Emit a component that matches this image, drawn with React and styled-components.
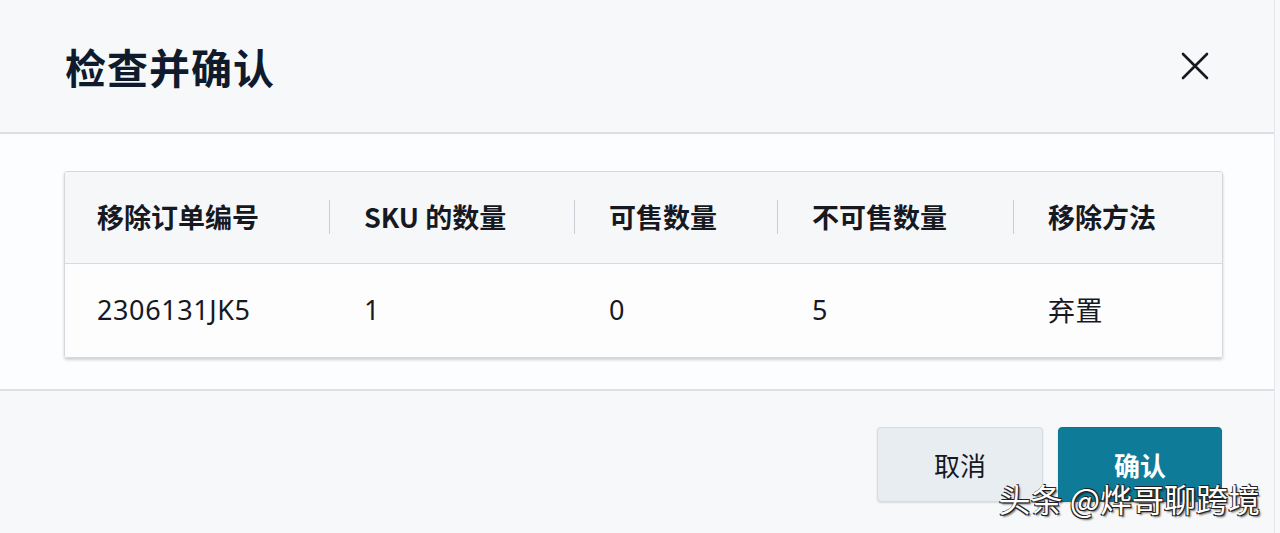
import React from 'react';
import styled, { createGlobalStyle } from 'styled-components';

const GlobalStyle = createGlobalStyle`
  html, body {
    margin: 0;
    padding: 0;
    background: #f7f8fa;
  }
  body {
    font-family: "Noto Sans", "Noto Sans CJK SC", sans-serif;
  }
`;

const columns = [
  { title: '移除订单编号', width: 264 },
  { title: 'SKU 的数量', width: 245 },
  { title: '可售数量', width: 203 },
  { title: '不可售数量', width: 236 },
  { title: '移除方法', width: 209 },
];

const row = ['2306131JK5', '1', '0', '5', '弃置'];

function App() {
  return (
    <>
      <GlobalStyle />
      <Dialog>
        <Header>
          <Title>检查并确认</Title>
          <CloseButton type="button" aria-label="close">
            <svg width="30" height="30" viewBox="0 0 30 30" fill="none">
              <path d="M3 3 L27 27 M27 3 L3 27" stroke="#16191f" strokeWidth="2.6" strokeLinecap="round" />
            </svg>
          </CloseButton>
        </Header>

        <Body>
          <Table>
            <HeadRow>
              {columns.map((col, i) => (
                <Cell key={col.title} $w={col.width} $first={i === 0}>
                  {i > 0 && <Divider />}
                  <HeadText>{col.title}</HeadText>
                </Cell>
              ))}
            </HeadRow>
            <DataRow>
              {row.map((val, i) => (
                <Cell key={i} $w={columns[i].width} $first={i === 0}>
                  <DataText>{val}</DataText>
                </Cell>
              ))}
            </DataRow>
          </Table>
        </Body>

        <Footer>
          <Button type="button">取消</Button>
          <Button type="button" $primary>确认</Button>
          <Watermark>头条 @烨哥聊跨境</Watermark>
        </Footer>
      </Dialog>
    </>
  );
}

const Dialog = styled.div`
  position: relative;
  width: 1274px;
  height: 533px;
  border-right: 1px solid #e3e6ea;
  background: #f7f8fa;
  display: flex;
  flex-direction: column;
  overflow: hidden;
`;

const Header = styled.div`
  height: 134px;
  box-sizing: border-box;
  display: flex;
  align-items: center;
  justify-content: space-between;
  padding: 0 64px 0 65px;
  border-bottom: 2px solid #dcdfe3;
  background: #f7f8fa;
`;

const Title = styled.h1`
  margin: 0;
  font-family: "Noto Sans CJK SC", sans-serif;
  font-size: 41px;
  font-weight: 700;
  color: #0f1b2d;
  letter-spacing: 1px;
`;

const CloseButton = styled.button`
  border: none;
  background: transparent;
  padding: 0;
  display: flex;
  cursor: pointer;
`;

const Body = styled.div`
  height: 257px;
  box-sizing: border-box;
  padding: 37px 53px 0 64px;
  background: #fcfdfe;
  border-bottom: 2px solid #dcdfe3;
`;

const Table = styled.div`
  width: 1157px;
  border: 1px solid #d4d8dd;
  border-radius: 3px;
  box-shadow: 0 2px 3px rgba(0, 0, 0, 0.18);
  overflow: hidden;
`;

const HeadRow = styled.div`
  display: flex;
  height: 91px;
  background: #f6f7f9;
  border-bottom: 1px solid #d7dbe0;
`;

const DataRow = styled.div`
  display: flex;
  height: 93px;
  background: #fdfdfe;
`;

const Cell = styled.div`
  position: relative;
  width: ${(p) => p.$w}px;
  box-sizing: border-box;
  display: flex;
  align-items: center;
  padding-left: ${(p) => (p.$first ? 32 : 35)}px;
`;

const Divider = styled.span`
  position: absolute;
  left: 0;
  top: 28px;
  height: 34px;
  width: 1px;
  background: #c9ced4;
`;

const HeadText = styled.span`
  font-family: "Noto Sans CJK SC", sans-serif;
  font-size: 27px;
  font-weight: 700;
  color: #16191f;
  margin-top: -2px;
`;

const DataText = styled.span`
  font-family: "Noto Sans", "Noto Sans CJK SC", sans-serif;
  font-size: 27px;
  font-weight: 400;
  color: #16191f;
  letter-spacing: 0.6px;
  margin-top: -2px;
`;

const Footer = styled.div`
  position: relative;
  flex: 1;
  display: flex;
  justify-content: flex-end;
  align-items: flex-start;
  gap: 15px;
  padding: 36px 52px 0 0;
  background: #f7f8fa;
`;

const Button = styled.button`
  width: ${(p) => (p.$primary ? 164 : 166)}px;
  height: 75px;
  border-radius: 4px;
  border: 1px solid ${(p) => (p.$primary ? '#0d7590' : '#d6dce2')};
  background: ${(p) => (p.$primary ? '#0e7c99' : '#e8edf1')};
  color: ${(p) => (p.$primary ? '#ffffff' : '#16191f')};
  font-family: "Noto Sans CJK SC", sans-serif;
  font-size: 26px;
  font-weight: ${(p) => (p.$primary ? 700 : 400)};
  padding-bottom: 2px;
  box-shadow: 0 1px 2px rgba(0, 0, 0, 0.12);
  cursor: pointer;
`;

const Watermark = styled.span`
  position: absolute;
  right: 14px;
  bottom: 12px;
  font-family: "Noto Sans CJK SC", sans-serif;
  font-size: 32px;
  color: #ffffff;
  text-shadow: 1px 1px 0 #222, -1px 1px 0 #222, 1px -1px 0 #222, 2px 2px 2px rgba(0, 0, 0, 0.6);
`;

export default App;
